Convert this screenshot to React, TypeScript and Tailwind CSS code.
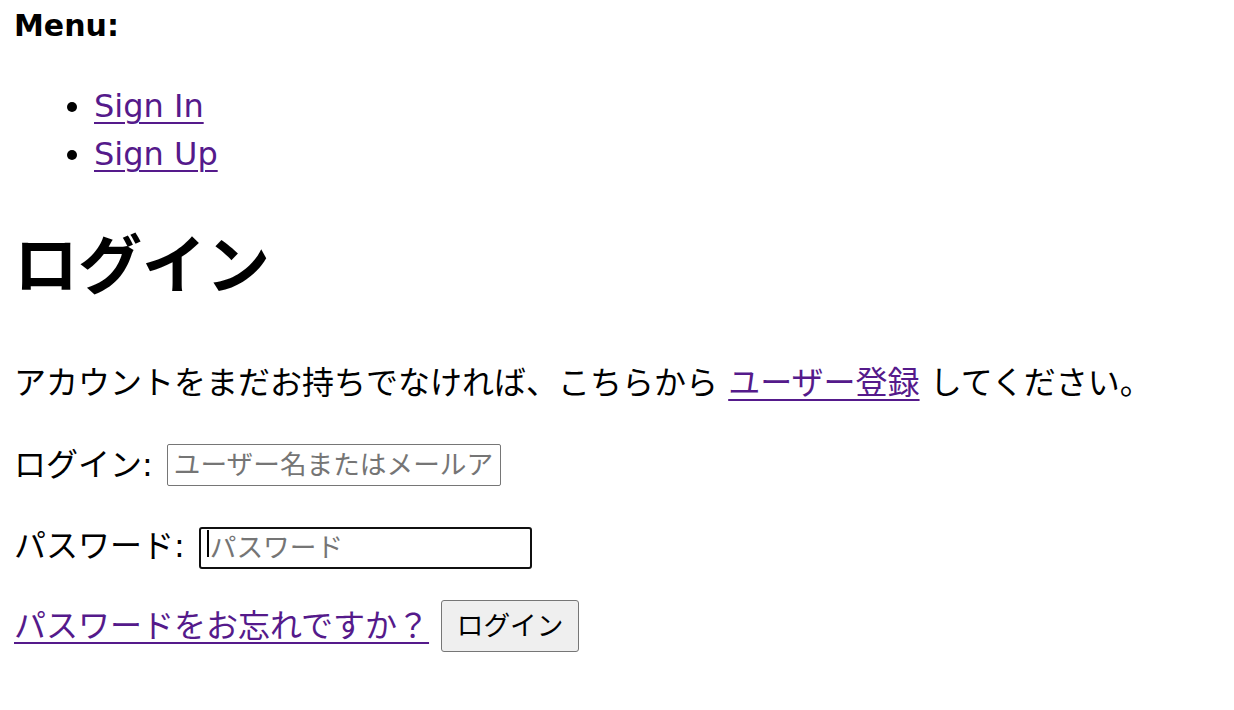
export default function App() {
  const font = { fontFamily: '"DejaVu Sans", "Noto Sans CJK JP", sans-serif' };
  return (
    <div
      className="min-h-[710px] w-[1234px] bg-white pl-[14px] text-[32px] leading-[48px] text-black font-['DejaVu_Sans','Noto_Sans_CJK_JP',sans-serif]"
      style={font}
    >
      <div className="h-[48px] pt-[2px] text-[30px] font-bold leading-[48px]">Menu:</div>

      <ul className="mt-[34px] list-disc pl-[80px]">
        <li className="h-[48px]">
          <a href="#" className="text-[#551a8b] underline decoration-[2px] underline-offset-[5px]">
            Sign In
          </a>
        </li>
        <li className="h-[48px]">
          <a href="#" className="text-[#551a8b] underline decoration-[2px] underline-offset-[5px]">
            Sign Up
          </a>
        </li>
      </ul>

      <h1 className="mt-[42px] h-[92px] text-[64px] font-bold leading-[92px]">ログイン</h1>

      <p className="mt-[47px] h-[48px] whitespace-nowrap">
        アカウントをまだお持ちでなければ、こちらから{' '}
        <a href="#" className="text-[#551a8b] underline decoration-[2px] underline-offset-[5px]">
          ユーザー登録
        </a>{' '}
        してください。
      </p>

      <div className="mt-[34px] flex h-[48px] items-center">
        <label>ログイン:</label>
        <input
          type="text"
          placeholder="ユーザー名またはメールアドレス"
          className="ml-[14px] h-[42px] w-[334px] rounded-[2px] border border-[#767676] px-[6px] text-[26.67px] placeholder:text-[#757575] outline-none"
        />
      </div>

      <div className="mt-[33px] flex h-[48px] items-center">
        <label>パスワード:</label>
        <div className="relative ml-[14px]">
          <input
            type="password"
            placeholder="パスワード"
            className="h-[42px] w-[333px] rounded-[3px] border-2 border-[#101010] px-[9px] text-[26.67px] placeholder:text-[#757575] outline-none"
          />
          <span className="absolute left-[8px] top-[8px] h-[27px] w-[2px] bg-black" />
        </div>
      </div>

      <div className="mt-[30px] flex h-[52px] items-center">
        <a href="#" className="text-[#551a8b] underline decoration-[2px] underline-offset-[5px]">
          パスワードをお忘れですか？
        </a>
        <button className="ml-[12px] h-[52px] w-[138px] rounded-[3px] border border-[#767676] bg-[#efefef] text-[26.67px] text-black">
          ログイン
        </button>
      </div>
    </div>
  );
}
